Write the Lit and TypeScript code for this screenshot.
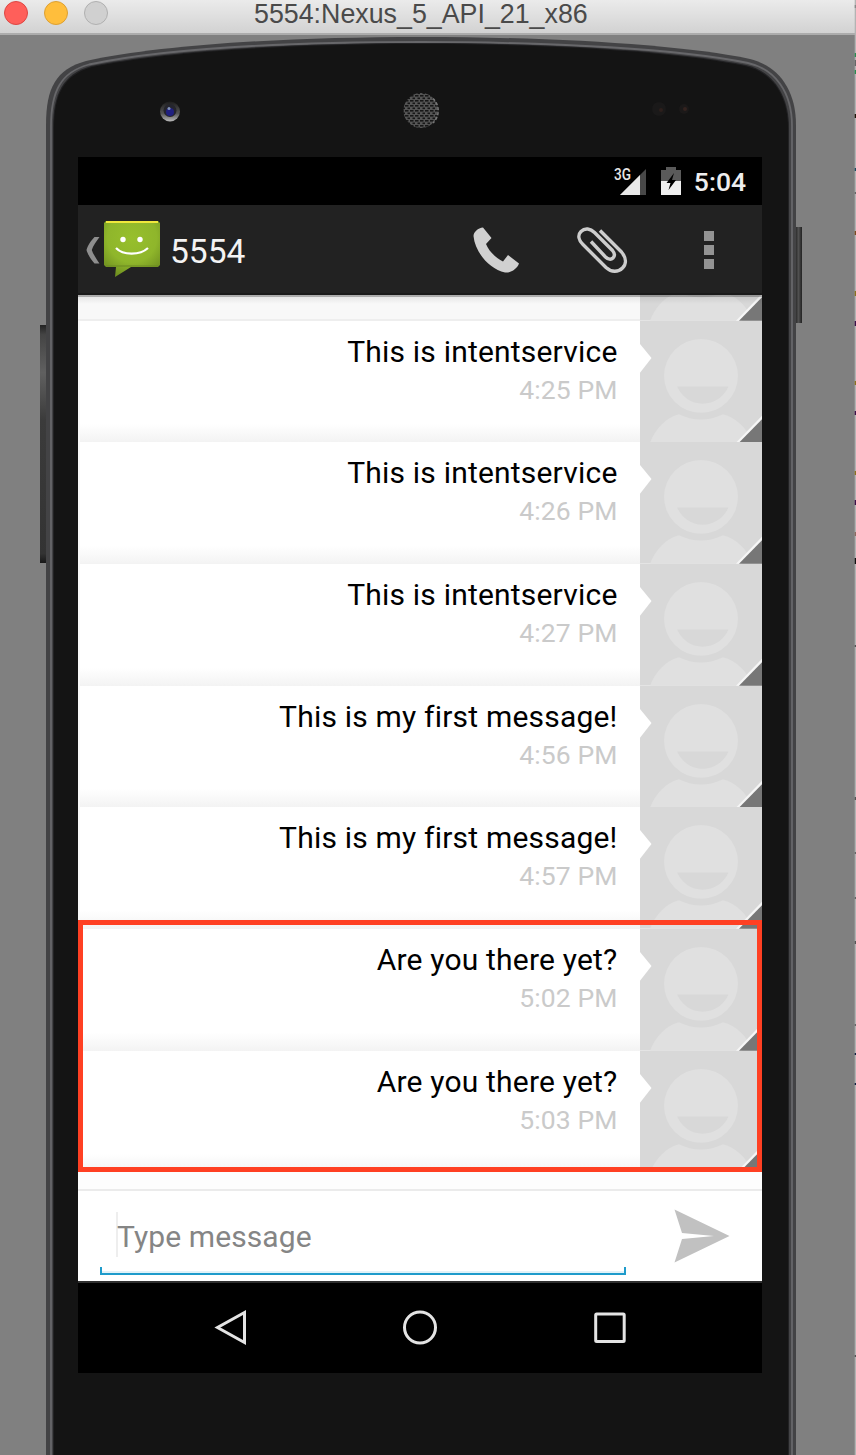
import { LitElement, html, css, svg } from "lit";
import { customElement, property } from "lit/decorators.js";

@customElement("contact-avatar")
class ContactAvatar extends LitElement {
  static styles = css`
    :host { display: block; width: 122px; height: 100%; }
    svg { display: block; width: 122px; height: 100%; }
  `;
  render() {
    return html`<svg viewBox="0 0 122 122" preserveAspectRatio="none">
      <rect width="122" height="122" fill="#d8d8d8" />
      <circle cx="61" cy="55" r="37" fill="#e0e0e0" />
      <path d="M37 65.8H88.5C84 76 74 83 62.500 83C51 83 42 76 37 65.800Z" fill="#d8d8d8" />
      <path d="M10 122C16 107 26 97 39 93.500C53 100.500 69 100.500 83 93.500C96 97 107 107 113 122Z" fill="#e0e0e0" />
      <path d="M122 95V102L102 122H96Z" fill="#f6f6f6" />
      <path d="M122 98.500V122H99Z" fill="#777" />
      <path d="M0 23L11.500 37L0 52Z" fill="#fff" />
    </svg>`;
  }
}

@customElement("message-row")
class MessageRow extends LitElement {
  @property() text = "";
  @property() time = "";
  static styles = css`
    :host { display: flex; height: 121.67px; flex: none; }
    .bubble {
      flex: 1; box-sizing: border-box; padding: 13px 22.500px 0 0; text-align: right; white-space: nowrap;
      background: linear-gradient(#fff 0 85%, #f3f3f3 100%);
      border-left: 2px solid #f8f8f8;
    }
    .text { font-size: 30px; line-height: 36px; letter-spacing: 0.2px; color: #000; }
    .time { font-size: 26.5px; line-height: 38px; letter-spacing: 0.1px; color: #cacaca; padding-top: 1px; }
  `;
  render() {
    return html`<div class="bubble">
        <div class="text">${this.text}</div>
        <div class="time">${this.time}</div>
      </div>
      <contact-avatar></contact-avatar>`;
  }
}

const MESSAGES = [
  ["This is intentservice", "4:25 PM"],
  ["This is intentservice", "4:26 PM"],
  ["This is intentservice", "4:27 PM"],
  ["This is my first message!", "4:56 PM"],
  ["This is my first message!", "4:57 PM"],
  ["Are you there yet?", "5:02 PM"],
  ["Are you there yet?", "5:03 PM"],
];

const SLIVERS: [number, number, string][] = [
  [5, 3, "#888"], [53, 4, "#2c8a50"], [60, 6, "#666"], [70, 4, "#2c8a50"], [114, 4, "#1e1408"],
  [168, 3, "#1c4b60"], [192, 2, "#666"], [231, 4, "#7a4a20"], [291, 5, "#8a7120"], [321, 5, "#3c1048"],
  [381, 4, "#8a7120"], [411, 4, "#3c1048"], [471, 4, "#8a7120"], [500, 5, "#3c1048"], [532, 4, "#8a6a60"],
  [558, 6, "#111"], [645, 2, "#555"], [797, 3, "#555"], [852, 2, "#666"], [897, 2, "#666"],
  [941, 3, "#555"], [1024, 2, "#666"], [1053, 2, "#102040"], [1083, 2, "#102040"], [1355, 2, "#555"],
];

@customElement("app-root")
class AppRoot extends LitElement {
  static styles = css`
    :host { display: block; width: 856px; height: 1455px; overflow: hidden; font-family: Roboto, sans-serif; }
    .titlebar {
      display: flex; align-items: flex-start; height: 35px; box-sizing: border-box;
      background: linear-gradient(#ebebeb, #d2d2d2); border-bottom: 2px solid #acacac; padding: 1px 0 0 4px; gap: 16px;
    }
    .light { width: 24px; height: 24px; border-radius: 50%; box-sizing: border-box; flex: none; }
    .red { background: #ff5f5a; border: 1px solid #dd4743; }
    .yellow { background: #ffbe3c; border: 1px solid #dda033; }
    .grey { background: #d0d0d0; border: 1px solid #b0b0b0; }
    .title { font: 26.8px/31px "Liberation Sans", sans-serif; height: 32px; margin-top: -2px; color: #4a4a4a; padding-left: 130px; white-space: nowrap; }
    .stage { position: relative; height: 1420px; box-sizing: border-box; background: #808080; padding: 122px 0 0 78px; }
    .bezel { position: absolute; left: 0; top: 0; width: 856px; height: 1420px; }
    .screen { position: relative; display: flex; flex-direction: column; width: 684px; height: 1216px; background: #fff; }
    .status { display: flex; align-items: center; justify-content: flex-end; height: 48px; background: #000; color: #eee; box-sizing: border-box; padding-right: 16px; flex: none; }
    .net { width: 34px; height: 32px; margin-right: 14px; }
    .three-g { font: 500 16px Roboto, sans-serif; fill: #e6e6e6; }
    .battery { width: 20px; height: 28px; margin-right: 13px; }
    .clock { font-size: 26.5px; line-height: 48px; font-weight: 500; padding-top: 2px; }
    .actionbar { display: flex; height: 90px; box-sizing: border-box; background: #222; border-bottom: 2px solid #1a1a1a; flex: none; }
    .back { width: 86px; height: 88px; flex: none; }
    .name { width: 292px; color: #f3f3f3; font-size: 33.500px; line-height: 94px; height: 88px; padding-left: 6px; box-sizing: border-box; flex: none; }
    .actions { width: 306px; height: 88px; flex: none; }
    .list { position: relative; display: flex; flex-direction: column; height: 894px; overflow: hidden; flex: none; background: #fdfdfd; }
    .peek { display: flex; height: 25.700px; flex: none; overflow: hidden; align-items: flex-end; position: relative; }
    .peek-bubble { flex: 1; height: 100%; box-sizing: border-box; background: #f8f8f8; border-bottom: 2px solid #eee; }
    .peek-avatar { height: 121.670px; }
    .shade { position: absolute; left: 0; right: 0; top: 0; height: 9px; background: linear-gradient(#0000004d 0 2px, #00000012 2px, #0000); }
    .highlight { position: absolute; left: 0; top: 625px; width: 683.500px; height: 252px; box-sizing: border-box; border: 5px solid #ff4023; }
    .composer { display: flex; height: 92px; box-sizing: border-box; border-top: 2px solid #ebebeb; padding-left: 22px; flex: none; }
    .field { position: relative; width: 526px; height: 84px; box-sizing: border-box; padding: 21px 0 0 16px; }
    .placeholder { font-size: 30px; line-height: 50px; letter-spacing: 0.1px; color: #858585; border-left: 2px solid #eee; text-indent: -1px; height: 45px; box-sizing: border-box; white-space: nowrap; }
    .underline { position: absolute; left: 0; bottom: 0; width: 526px; height: 8px; box-sizing: border-box; border: 2px solid #1e9bcb; border-top: 0; box-shadow: inset 0 -2px #e2f2f8; }
    .send { width: 136px; height: 90px; }
    .nav { height: 92px; box-sizing: border-box; border-top: 2px solid #303030; background: #000; flex: none; }
    .nav svg { display: block; width: 684px; height: 90px; }
    .edge { position: absolute; right: 0; top: -35px; width: 2px; height: 1455px; }
  `;

  render() {
    return html`
      <div class="titlebar">
        <span class="light red"></span><span class="light yellow"></span><span class="light grey"></span>
        <span class="title">5554:Nexus_5_API_21_x86</span>
      </div>
      <div class="stage">
        <svg class="bezel" viewBox="0 35 856 1420">
          <defs>
            <linearGradient id="key" x2="0" y2="1"><stop stop-color="#222" /><stop offset=".04" stop-color="#444" /><stop offset=".2" stop-color="#606060" /><stop offset=".4" stop-color="#3b3b3b" /><stop offset=".96" stop-color="#333" /><stop offset="1" stop-color="#181818" /></linearGradient>
            <linearGradient id="power"><stop stop-color="#202020" /><stop offset=".5" stop-color="#505050" /><stop offset="1" stop-color="#222" /></linearGradient>
            <linearGradient id="lens" x2="0" y2="1"><stop stop-color="#1d1d1d" /><stop offset=".6" stop-color="#555" /><stop offset="1" stop-color="#bbb" /></linearGradient>
            <pattern id="mesh" width="5" height="5" patternUnits="userSpaceOnUse"><rect width="5" height="5" fill="#555" /><rect x="0" y="0" width="3.500" height="1.600" fill="#171717" /><rect x="2.500" y="2.500" width="2.500" height="1.600" fill="#171717" /></pattern>
          </defs>
          <rect x="40" y="325" width="7" height="238" fill="url(#key)" />
          <rect x="795" y="227" width="7" height="96" fill="url(#power)" />
          <path d="M46 1460V125C46 88 56 69 86 61C160 45 285 37 421 37C557 37 682 45 750 59C778 66 796 89 796 125V1460Z" fill="#434345" />
          <path d="M51 1460V126C51 91 61 72 89 64.500C162 49 285 42 421 42C557 42 680 49 748 63C775 69 792 92 792 126V1460" fill="none" stroke="#67676a" stroke-width="1.800" />
          <path d="M53 1460V128C53 94 63 74 91 66C164 51 286 43 421 43C556 43 678 51 746 65C772 71 789 94 789 128V1460Z" fill="#222224" />
          <path d="M54 1460V128C54 94 64 75 92 67C164 52 286 44 421 44C556 44 678 52 745 66C771 72 788 94 788 128V1460Z" fill="#141414" />
          <circle cx="170" cy="111.500" r="10" fill="url(#lens)" />
          <circle cx="170" cy="110.500" r="6.500" fill="#25252d" /><circle cx="170" cy="112" r="4" fill="#202080" /><circle cx="169" cy="108.500" r="1.500" fill="#8293bc" />
          <circle cx="421" cy="110.500" r="17.500" fill="url(#mesh)" />
          <path d="M433 98.500A17 17 0 0 1 433 123" fill="none" stroke="#777" stroke-width="1.500" stroke-dasharray="3 2" />
          <circle cx="659" cy="109" r="7" fill="#1a1919" /><circle cx="661" cy="110" r="2" fill="#2c1f1c" />
          <circle cx="684" cy="109" r="5" fill="#1b1919" /><circle cx="685" cy="109" r="2" fill="#33231f" />
        </svg>
        <svg class="edge" viewBox="0 0 2 1455">
          <rect x=".7" width="1.300" height="1455" fill="#b3b3b3" />
          ${SLIVERS.map(([y, h, c]) => svg`<rect x=".7" y=${y} width="1.300" height=${h} fill=${c} />`)}
        </svg>
        <div class="screen">
          <div class="status">
            <svg class="net" viewBox="0 0 34 32">
              <text class="three-g" x="1" y="15" textLength="17" lengthAdjust="spacingAndGlyphs">3G</text>
              <path d="M33 4V30H7Z" fill="#484848" /><path d="M27 10V30H7Z" fill="#e8e8e8" />
            </svg>
            <svg class="battery" viewBox="0 0 20 28">
              <path d="M0 3H5V0H15V3H20V28H0Z" fill="#5a5a5a" /><path d="M0 14H20V28H0Z" fill="#f0f0f0" />
              <path d="M13 6L5.500 16H9.500L7.500 23L15 13H11Z" fill="#000" />
            </svg>
            <span class="clock">5:04</span>
          </div>
          <div class="actionbar">
            <svg class="back" viewBox="78 205 86 88">
              <defs><radialGradient id="bub" cy=".3" r=".8"><stop stop-color="#97bf2c" /><stop offset=".55" stop-color="#8fb62b" /><stop offset="1" stop-color="#67851d" /></radialGradient></defs>
              <path d="M94.500 237H99.500C96.500 241 93 246 91.800 250C93 254 96.500 259 99.500 263.500H94.500C91 259.500 87.500 254 86.500 250C87.500 246 91 240.500 94.500 237Z" fill="#8e8e8e" />
              <path d="M106 221H158L160 223V265L158 267H131L115 277L116 267H106L104 265V223Z" fill="url(#bub)" />
              <path d="M106 221H158V223H106Z" fill="#f0e83c" />
              <path d="M106 266H158" stroke="#6b8922" />
              <circle cx="123" cy="239.500" r="2.700" fill="#fff" /><circle cx="140" cy="239.500" r="2.700" fill="#fff" />
              <path d="M116 248C123 255.500 140 255.500 148 248" fill="none" stroke="#fff" stroke-width="2.200" />
            </svg>
            <div class="name">5554</div>
            <svg class="actions" viewBox="456 205 306 88">
              <path d="M483 227.500L491.500 238L486 244C489 251.500 496 258 503 261.500L508 255L519 263.500C517 269 511 273 505 272.500C489 269 475 252 473.500 236C473.500 232 478 228 483 227.500Z" fill="#d0d0d0" />
              <path d="M600 230.500L621.500 252C626.500 258 626.500 264 622.500 268C618 272.500 611.500 272.500 606 267.500L583 244.500C578.500 240 577.500 235 581 231.500C585 227.500 590.500 228.500 594.500 232.500L612.500 250.500C615 253.500 615 256 613 258C611 260 608 259.500 605.500 257L591 241.500" fill="none" stroke="#cdcdcd" stroke-width="3.400" />
              <path d="M704 231H714V241H704ZM704 245H714V255H704ZM704 259H714V269H704Z" fill="#939393" />
            </svg>
          </div>
          <div class="list">
            <div class="peek">
              <div class="peek-bubble"></div><contact-avatar class="peek-avatar"></contact-avatar>
              <div class="shade"></div>
            </div>
            ${MESSAGES.map(([t, w]) => html`<message-row .text=${t} .time=${w}></message-row>`)}
            <div class="highlight"></div>
          </div>
          <div class="composer">
            <div class="field"><div class="placeholder">Type message</div><div class="underline"></div></div>
            <svg class="send" viewBox="626 1191 136 90">
              <path d="M674.500 1209.500L729.500 1236L674.500 1262.500L682 1239L714 1236L682 1233Z" fill="#c1c1c1" />
            </svg>
          </div>
          <div class="nav">
            <svg viewBox="78 1283 684 90" fill="none" stroke="#e4e4e4" stroke-width="3">
              <path d="M244.500 1312.500V1342.500L217.500 1327.500Z" />
              <circle cx="420" cy="1327.500" r="15.500" />
              <rect x="595.700" y="1314" width="28.500" height="27.500" rx="1" />
            </svg>
          </div>
        </div>
      </div>`;
  }
}
